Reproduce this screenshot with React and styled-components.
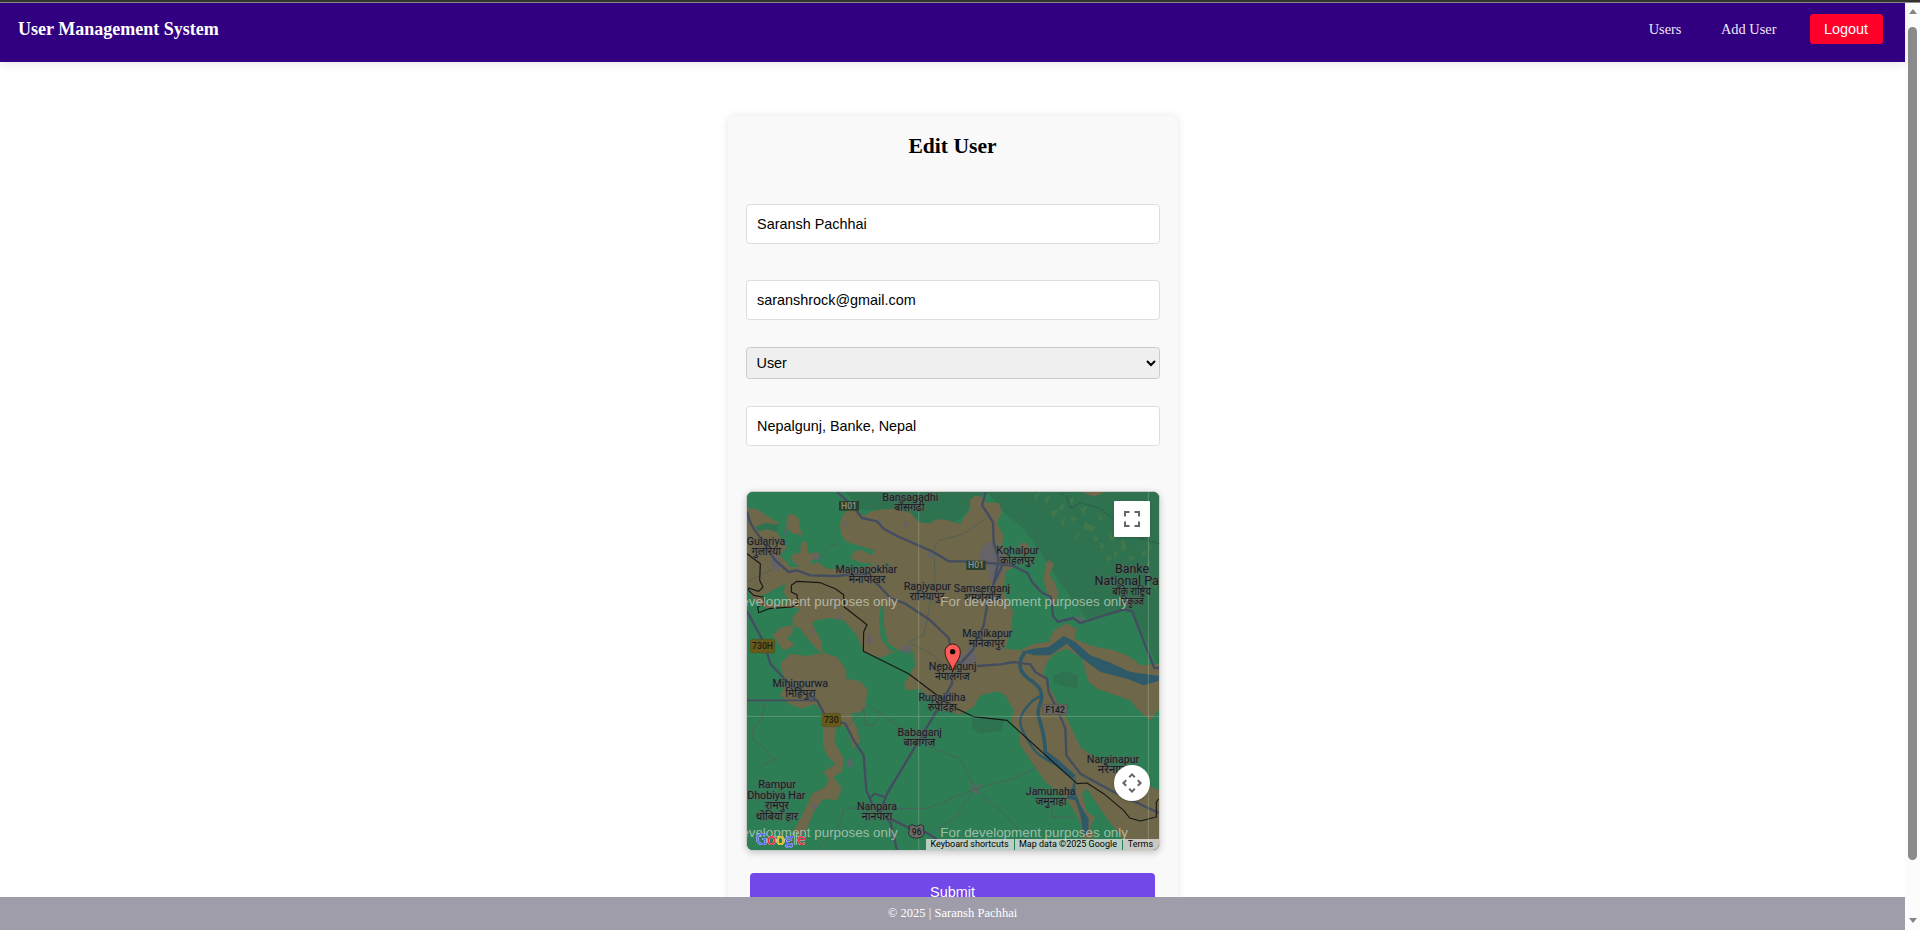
import React from "react";
import styled, { createGlobalStyle } from "styled-components";

const GlobalStyle = createGlobalStyle`
  * { box-sizing: border-box; }
  html, body { margin: 0; padding: 0; overflow: hidden; background: #fff; }
  body { font-family: "Liberation Serif", serif; color: #000; }
`;

const Shell = styled.div`
  display: flex;
  flex-direction: column;
  height: 100vh;
  overflow: hidden;
`;
const TopEdge = styled.div`
  flex: none;
  height: 3px;
  background: #333;
  border-bottom: 1px solid #8c8c8c;
`;
const Body = styled.div`
  flex: 1;
  min-height: 0;
  display: flex;
`;
const Page = styled.div`
  flex: 1;
  min-width: 0;
  display: flex;
  flex-direction: column;
`;

const Header = styled.header`
  flex: none;
  height: 59px;
  padding: 11px 22px 18px 18px;
  display: flex;
  justify-content: space-between;
  align-items: flex-start;
  background: #310080;
  box-shadow: 0 2px 9px rgba(0, 0, 0, 0.1);
  z-index: 1;
`;
const Brand = styled.div`
  font-size: 18px;
  font-weight: bold;
  line-height: 30px;
  color: #fff;
`;
const Nav = styled.nav`
  display: flex;
  align-items: center;
`;
const NavLink = styled.a`
  font-size: 14.4px;
  line-height: 30px;
  color: #eee8f5;
  margin-right: ${(p) => p.$gap}px;
`;
const LogoutButton = styled.button`
  width: 73px;
  height: 30px;
  padding: 0 1px 0 0;
  border: 0;
  border-radius: 3.6px;
  background: #ff002b;
  color: #fff;
  font: 14.4px "Liberation Sans", sans-serif;
`;

const Main = styled.main`
  flex: 1;
  min-height: 0;
  overflow: hidden;
  padding-top: 54px;
`;
const Card = styled.form`
  width: 450px;
  height: 830px;
  margin: 0 auto;
  padding: 18px 18px 0;
  display: flex;
  flex-direction: column;
  background: #f9f9f9;
  border-radius: 7px;
  box-shadow: 0 0 9px rgba(0, 0, 0, 0.1);
`;
const Title = styled.h2`
  margin: 0 0 45px;
  font-size: 21.6px;
  line-height: 25px;
  text-align: center;
`;
const Field = styled.input`
  width: 100%;
  height: 40px;
  margin-bottom: ${(p) => p.$gap}px;
  padding: 0 10px 0 10.6px;
  border: 1px solid #ddd;
  border-radius: 3.6px;
  background: #fff;
  color: #000;
  outline: 0;
  font: 14.4px "Liberation Sans", sans-serif;
`;
const RoleSelect = styled.select`
  width: 100%;
  height: 32px;
  margin-bottom: 27px;
  padding: 0 0 0 6px;
  border: 1px solid #ccc;
  border-radius: 3.6px;
  background-color: #efefef;
  color: #000;
  font: 14.4px "Liberation Sans", sans-serif;
`;
const SubmitButton = styled.button`
  flex: none;
  height: 38px;
  margin: 22px 5px 0 4px;
  padding: 0 0 0 1px;
  border: 0;
  border-radius: 4px;
  background: #7248e8;
  color: #fff;
  font: 14.4px "Liberation Sans", sans-serif;
`;

const MapFrame = styled.div`
  position: relative;
  flex: none;
  height: 360px;
  border: 1px solid #ccc;
  border-radius: 7px;
  overflow: hidden;
  background: #2d7d55;
  box-shadow: 0 2px 7px rgba(0, 0, 0, 0.2);
`;
const MapDrawing = styled.svg`
  display: block;
  width: 412px;
  height: 358px;
`;
const MapControl = styled.button`
  position: absolute;
  right: 9px;
  ${(p) => (p.$round ? "bottom: 49px;" : "top: 9px;")}
  width: 36px;
  height: 36px;
  padding: 0;
  border: 0;
  border-radius: ${(p) => (p.$round ? "50%" : "1px")};
  background: #fff;
  box-shadow: 0 1px 3px rgba(0, 0, 0, 0.15);
  svg { display: block; }
`;
const Attribution = styled.div`
  position: absolute;
  right: 0;
  bottom: 0;
  display: flex;
  gap: 1px;
`;
const Credit = styled.span`
  width: ${(p) => p.$width}px;
  height: 11px;
  text-align: center;
  font: 9px/11px Roboto, sans-serif;
  color: #000;
  white-space: nowrap;
  background: rgba(235, 235, 235, 0.74);
`;

const Footer = styled.footer`
  flex: none;
  height: 33px;
  line-height: 32px;
  text-align: center;
  font-size: 12.6px;
  color: #fff;
  background: #a09daa;
  z-index: 1;
`;

const ScrollTrack = styled.div`
  flex: none;
  width: 15px;
  background: #fcfcfc;
  display: flex;
  flex-direction: column;
  align-items: center;
  padding: 6px 0 7px;
`;
const ScrollArrow = styled.i`
  border: solid transparent;
  border-width: 0 4.5px;
  ${(p) => (p.$down ? "border-top: 5px solid #858585; margin-top: auto;" : "border-bottom: 5px solid #858585;")}
`;
const ScrollThumb = styled.div`
  width: 9px;
  height: 833px;
  margin-top: 13px;
  border-radius: 5px;
  background: #8b8b8b;
`;

/* Map data, in thirds of a pixel */
const TAN = "#6f6749";
const GREEN = "#2d7d55";
const FOREST = "#2f7250";
const WATER = "#2e5968";
const ROAD = "#444c60";

const land = [
  "M0,48L30,52 65,75 95,92 88,105 92,125 120,165 100,190 130,225 170,225 190,215 215,212 240,230 265,232 320,235 385,215 345,212 312,200 320,178 345,175 375,190 383,175 350,165 300,150 283,130 278,95 290,65 310,50 335,58 350,72 375,58 410,52 440,50 490,62 515,90 545,95 570,82 600,85 640,95 655,70 670,50 668,25 685,10 705,15 720,32 755,32 765,60 750,95 770,130 765,160 790,215 800,225 775,240 770,300 798,360 792,410 775,470 820,475 860,455 905,450 920,415 960,394 990,412 982,440 1035,462 1100,475 1150,495 1180,520 1236,515 1236,650 1210,685 1175,655 1150,625 1050,590 1025,570 1005,500 960,470 925,482 900,510 890,540 905,580 925,620 965,690 1000,765 1060,810 1140,850 1236,895V1074H1140L1125,1035 1080,980 1020,890 1005,905 1020,960 1045,975 1030,1005 1042,1040 1010,1040 1000,990 960,920 895,870 840,790 820,760 815,715 792,690 800,655 775,610 750,598 700,610 680,645 640,668 590,655 550,620 520,592 475,595 472,575 490,545 505,520 498,478 470,470 455,478 430,485 400,497 350,480 330,430 290,385 250,378 205,385 195,395 222,445 228,490 190,450 160,410 137,398 137,375 160,350 100,345 60,350 20,325 0,285Z",
  "M120,70L140,65 155,80 160,115 170,130 140,125 118,110Z",
  "M162,150L178,150 185,185 212,180 220,195 195,205 178,232 150,220 130,200 140,185 160,182Z",
  "M75,430L105,405 140,400 135,425 120,440 145,460 110,475Z",
  "M100,515L130,485 180,492 230,483 270,495 298,535 298,560 340,568 362,595 355,645 340,660 310,665 330,710 340,750 320,770 300,710 270,690 262,750 290,800 285,840 260,855 285,890 270,925 230,920 200,960 180,1010 150,1050 120,1050 155,990 175,950 195,905 235,885 245,865 230,840 265,815 240,790 228,760 228,700 240,680 205,635 165,650 125,635 100,610 115,575Z",
  "M895,215L905,205 920,215 908,250 925,275 935,305 922,340 900,300 890,260Z",
  "M815,160L832,150 845,162 840,190 820,190Z",
  "M1005,0H1075L1040,14Z",
];

const holes = [
  "M42,310L60,305 85,290 115,275 110,300 125,328 110,340 60,335Z",
  "M405,330L412,350 410,400 425,455 460,478 430,478 402,440 395,380Z",
];

const forests = [
  "M300,0H710L700,20 670,20 665,50 640,80 600,98 560,85 530,100 490,65 440,50 375,55 340,50Z",
  "M720,0H1236V530L1155,355 1020,380 945,280 880,180 830,110 770,60Z",
  "M25,105L55,92 95,98 90,120 60,112 35,118Z",
  "M917,550L950,538 993,548 990,588 950,582 920,572Z",
  "M675,680H770L765,715 700,725 675,712Z",
];

const rivers = [
  "M820,480L860,470 905,465 950,432 985,450 1030,490 1090,512 1150,540 1236,552V566L1190,580 1140,560 1060,540 1000,495 960,455 910,490 860,490 835,482Z",
  "M985,845L975,890 960,895 960,920 985,925 1000,970 1010,1030 1024,1020 1025,980 1000,940 985,900Z",
  "M895,775L930,800 985,850 975,862 930,825 892,792Z",
];

const streams = [
  ["M835,480C810,510 815,540 845,560S895,600 878,640 895,690 895,790", 11],
  ["M885,612C850,620 815,670 820,695S840,740 855,765 895,800 930,820", 7],
];

const roads = [
  ["M270,0L315,40 345,78 390,88 410,110 450,132 555,178 605,208 655,208 740,214 800,222 842,244 855,270 885,302 912,315 918,372 933,390 978,378 1000,393 1130,352 1155,358 1222,528H1236", 7],
  ["M0,58C10,110 30,115 60,170L85,205 125,240 150,235 190,250 265,252 350,245 395,280 430,318 475,335 550,385 605,438 617,500 640,515 680,470 710,400 722,330 740,275 768,215", 7],
  ["M716,0L705,40 738,90 740,150 755,205 740,275", 7],
  ["M690,522L760,517 800,510 850,517 865,540 900,560 905,600 930,650 955,710 958,790 1000,845 1100,900 1236,963", 7],
  ["M617,540L615,575 570,655 420,905 400,960", 7],
  ["M0,358L50,450 70,515 130,580 210,625 240,680 295,695 320,745 350,790 358,895 375,935 430,990 450,1074", 7],
  ["M0,625H195L210,625", 5],
  ["M368,920L382,905 412,915", 6],
  ["M430,980L480,1005 535,1020 620,1074", 7],
];

const trails = [
  "M272,155L245,165 215,210M0,270L75,232M620,135L575,145 560,170 565,260 530,430 485,450 560,490 600,530M715,80L650,125 600,140",
  "M55,625L45,680 15,715 20,745 50,765 65,790 85,800 40,825M355,635L410,670 485,725 570,775 640,800 685,890 730,930 780,975 850,1050",
  "M685,890L540,950 290,948 280,1000 210,1074M685,890L625,975 560,1020M685,890L800,860 870,825M915,905V975H980M300,705L350,650 355,700 380,700 400,670",
];

const blocks =
  "M700,175L720,150 745,148 770,190 768,240 740,285 728,260 720,215 695,205ZM75,190L95,195 105,220 95,240 75,225ZM665,460L680,470 690,510 650,525 635,515 640,490 660,485ZM468,458L498,460 485,487 463,480ZM358,430L373,427 378,450 365,460ZM980,380L998,373 1012,383 998,392ZM668,870L688,885 708,870 692,895 705,910 682,900 670,908 678,892ZM205,182L220,192 210,208 195,195ZM305,798L318,810 312,828 298,820ZM200,930L215,940 205,955 192,945ZM290,85L300,95 292,110ZM395,82L407,90 398,105ZM110,115L120,100 108,150ZM470,90L490,95 475,112ZM540,185L560,180 555,205ZM190,410L205,418 198,430ZM270,370L285,372 275,385Z";

const patches =
  "M1015,90L1045,105 1035,120 1010,108ZM970,70L990,80 975,90ZM1060,150L1075,165 1060,172ZM1085,120L1105,140 1090,150ZM1120,150L1130,140 1140,170 1125,180ZM990,120L1000,130 985,140ZM1180,180L1200,175 1190,195ZM1205,150L1215,165 1205,180ZM1080,190L1095,200 1080,210ZM1150,190L1165,200 1145,205ZM1050,60L1070,80 1055,85ZM890,20L910,10 900,35ZM935,45L955,30 945,60ZM1000,50L1020,40 1010,70ZM860,10L880,2 865,28ZM910,60L935,50 920,80ZM940,90L955,75 950,105ZM965,25L980,12 975,40ZM1040,130L1055,140 1042,152ZM1100,175L1115,185 1102,200ZM1195,220L1210,205 1205,235ZM1215,280L1230,265 1228,300Z";

const border =
  "M0,185L40,215 38,265 48,285 35,298 5,288 5,295 20,310 48,315 52,335 32,345 35,362 65,350 135,345 152,335 150,308 133,300 133,280 150,268 220,272 265,290 290,308 292,345 360,398 350,420 349,478 485,545 560,602 630,650 680,674 780,685 990,875 1020,873 1070,905 1130,955 1148,978 1180,987 1228,975V930L1236,920";

const labels = [
  ["Bansagadhi", 490, 27, 168], ["बाँसगढी", 487, 57, 90],
  ["Gulariya", 57, 160, 115], ["गुलरिया", 58, 190, 88],
  ["Mainapokhar", 358, 242, 185], ["मैनापोखर", 360, 272, 110],
  ["Raniyapur", 541, 294, 142], ["रानियापुर", 540, 324, 104],
  ["Samserganj", 705, 299, 169], ["शमशेरगंज", 707, 326, 112],
  ["Kohalpur", 812, 186, 128], ["कोहलपुर", 811, 217, 104],
  ["Manikapur", 721, 434, 150], ["मनिकापुर", 719, 465, 107],
  ["Nepalgunj", 617, 535, 143], ["नेपालगंज", 616, 564, 104],
  ["Mihinpurwa", 160, 585, 167], ["मिहिंपुरा", 160, 615, 91],
  ["Rupaidiha", 585, 628, 141], ["रुपैदिहा", 586, 658, 86],
  ["Babaganj", 518, 731, 133], ["बाबागंज", 517, 762, 95],
  ["Rampur", 90, 888, 113], ["Dhobiya Har", 88, 920, 175],
  ["रामपुर", 90, 951, 72], ["धोबिया हार", 90, 983, 127],
  ["Nanpara", 390, 953, 120], ["नानपारा", 390, 983, 91],
  ["Narainapur", 1098, 812, 157], ["नरैनापुर", 1100, 842, 95],
  ["Jamunaha", 911, 909, 149], ["जमुनाहा", 912, 940, 93],
  ["Banke", 1155, 242, 102, 36], ["National Pa", 1139, 279, 193, 36],
  ["बाँके राष्ट्रिय", 1154, 310, 116], ["निकुञ्ज", 1156, 340, 68],
];

const MapLabel = styled.text`
  font-family: Roboto, "Noto Sans", sans-serif;
  font-size: ${(p) => p.$size}px;
  text-anchor: middle;
  fill: #17191c;
  stroke: rgba(95, 98, 98, 0.6);
  stroke-width: 5px;
  stroke-linejoin: round;
  paint-order: stroke;
`;
const Watermark = styled.text`
  font-family: "Liberation Sans", sans-serif;
  font-size: 40px;
  fill: rgba(225, 230, 222, 0.62);
`;
const ShieldText = styled.text`
  font-family: Roboto, sans-serif;
  font-size: 26px;
  font-weight: 500;
  text-anchor: middle;
  fill: ${(p) => (p.$light ? "#8c9288" : "#1b1d14")};
`;
const LogoText = styled.text`
  font-family: Lato, sans-serif;
  font-size: 52px;
  font-weight: 700;
  filter: drop-shadow(0 0 1.5px #e6e8ee) drop-shadow(0 0 1.5px #e6e8ee);
`;

function Shield({ text, x, y, w, h, fill, light }) {
  return (
    <g>
      <rect x={x} y={y} width={w} height={h} rx={light ? 0 : 6} fill={fill} stroke={light ? "none" : "#494318"} strokeWidth="1" />
      <ShieldText $light={light} x={x + w / 2} y={y + h / 2 + 9}>{text}</ShieldText>
    </g>
  );
}

function Logo() {
  return (
    <LogoText x="26" y="1059" textLength="150" lengthAdjust="spacingAndGlyphs">
      <tspan fill="#5a6cf0">G</tspan>
      <tspan fill="#ea2f45">o</tspan>
      <tspan fill="#e3bb18">o</tspan>
      <tspan fill="#5a6cf0">g</tspan>
      <tspan fill="#1fa557">l</tspan>
      <tspan fill="#ea2f45">e</tspan>
    </LogoText>
  );
}

function RegionMap() {
  return (
    <MapDrawing viewBox="0 0 1236 1074">
      <rect width="1236" height="1074" fill={GREEN} />
      {forests.slice(0, 2).map((d) => <path key={d} d={d} fill={FOREST} />)}
      {land.map((d) => <path key={d} d={d} fill={TAN} />)}
      {holes.map((d) => <path key={d} d={d} fill={GREEN} />)}
      {forests.slice(2).map((d) => <path key={d} d={d} fill={FOREST} />)}
      <path d={patches} fill="#46794a" opacity="0.8" />
      <path d={blocks} fill="#64636a" opacity="0.85" />
      {rivers.map((d) => <path key={d} d={d} fill={WATER} />)}
      <g fill="none" strokeLinejoin="round">
        {streams.map(([d, w]) => <path key={d} d={d} stroke={WATER} strokeWidth={w} />)}
        {trails.map((d) => <path key={d} d={d} stroke="#4d5f58" strokeWidth="2.5" />)}
        {roads.map(([d, w]) => <path key={d} d={d} stroke={ROAD} strokeWidth={w} />)}
        <path d={border} stroke="#151914" strokeWidth="3.5" />
        <path d="M940,0L960,15 970,48 1000,32 1060,50 1110,90 1180,140 1236,155" stroke="#2a4535" strokeWidth="3" strokeDasharray="4 5" />
        <path d="M515,0V1074M1204,0V1074M0,673H1236" stroke="#c8d3bd" strokeOpacity="0.3" strokeWidth="3" />
      </g>
      <circle cx="420" cy="218" r="5" fill={WATER} />
      <Shield text="H01" x={276} y={27} w={60} h={29} fill="#2b402c" light />
      <Shield text="H01" x={658} y={206} w={58} h={28} fill="#2b402c" light />
      <Shield text="730H" x={10} y={442} w={73} h={41} fill="#67591b" />
      <Shield text="730" x={225} y={664} w={56} h={40} fill="#67591b" />
      <Shield text="F142" x={887} y={637} w={75} h={31} fill="#666566" />
      <path d="M486,1003L495,998 508,1003 521,998 531,1003 529,1014C538,1028 524,1037 508,1039 492,1037 479,1028 487,1014Z" fill="#69696b" stroke="#292d2b" strokeWidth="3" />
      <ShieldText x="509" y="1028">96</ShieldText>
      {labels.map(([text, x, y, w, size]) => (
        <MapLabel key={text} $size={size || 31} x={x} y={y} textLength={w} lengthAdjust="spacingAndGlyphs">{text}</MapLabel>
      ))}
      {[342, 1034].map((y) => (
        <g key={y}>
          <Watermark x="-111" y={y} textLength="563" lengthAdjust="spacingAndGlyphs">For development purposes only</Watermark>
          <Watermark x="580" y={y} textLength="563" lengthAdjust="spacingAndGlyphs">For development purposes only</Watermark>
        </g>
      ))}
      <path d="M617,540C615,518 594,504 594,479A23,23 0 1 1 640,479C640,504 619,518 617,540Z" fill="#ff5c58" stroke="#3a1512" strokeWidth="3" />
      <circle cx="617" cy="479" r="8" fill="#160404" />
      <Logo />
    </MapDrawing>
  );
}

export default function App() {
  return (
    <Shell>
      <GlobalStyle />
      <TopEdge />
      <Body>
        <Page>
          <Header>
            <Brand>User Management System</Brand>
            <Nav>
              <NavLink $gap={39.5}>Users</NavLink>
              <NavLink $gap={33.5}>Add User</NavLink>
              <LogoutButton>Logout</LogoutButton>
            </Nav>
          </Header>
          <Main>
            <Card>
              <Title>Edit User</Title>
              <Field $gap={36} defaultValue="Saransh Pachhai" />
              <Field $gap={27} defaultValue="saranshrock@gmail.com" />
              <RoleSelect defaultValue="User">
                <option>User</option>
              </RoleSelect>
              <Field $gap={45} defaultValue="Nepalgunj, Banke, Nepal" />
              <MapFrame>
                <RegionMap />
                <MapControl type="button" aria-label="Toggle fullscreen view">
                  <svg width="36" height="36" viewBox="0 0 36 36" fill="none" stroke="#666" strokeWidth="2">
                    <path d="M11 15.500V11h4.500M20.500 11H25v4.500M25 20.500V25h-4.500M15.500 25H11v-4.500" />
                  </svg>
                </MapControl>
                <MapControl type="button" $round aria-label="Map camera controls">
                  <svg width="36" height="36" viewBox="0 0 36 36" fill="none" stroke="#666" strokeWidth="2">
                    <path d="M15.200 12.200L18 9.400l2.800 2.800M15.200 23.800L18 26.600l2.800-2.800M12.200 15.200L9.400 18l2.800 2.800M23.800 15.200L26.600 18l-2.800 2.800" />
                  </svg>
                </MapControl>
                <Attribution>
                  <Credit $width={88}>Keyboard shortcuts</Credit>
                  <Credit $width={107}>Map data ©2025 Google</Credit>
                  <Credit $width={36}>Terms</Credit>
                </Attribution>
              </MapFrame>
              <SubmitButton type="button">Submit</SubmitButton>
            </Card>
          </Main>
          <Footer>© 2025 | Saransh Pachhai</Footer>
        </Page>
        <ScrollTrack>
          <ScrollArrow />
          <ScrollThumb />
          <ScrollArrow $down />
        </ScrollTrack>
      </Body>
    </Shell>
  );
}
